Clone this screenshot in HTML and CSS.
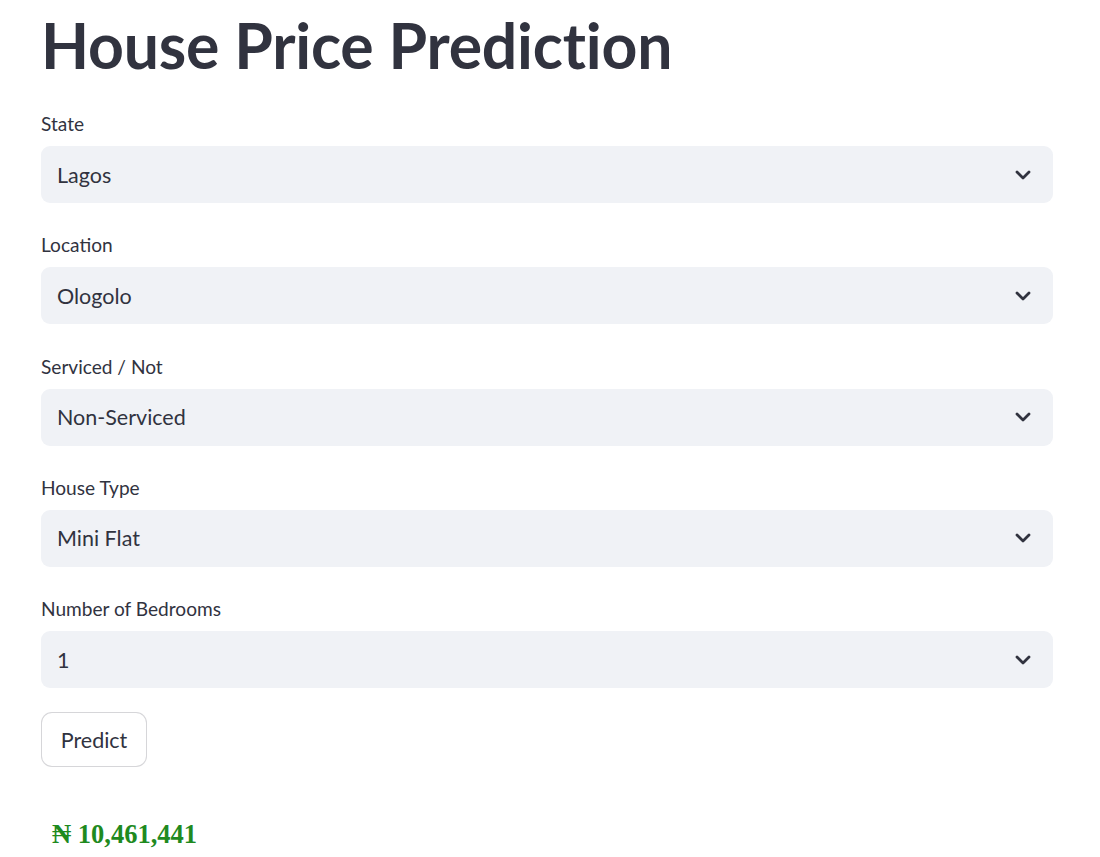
FILE: index.html
```html
<!DOCTYPE html>
<html>
<head>
<meta charset="utf-8">
<link rel="stylesheet" href="styles.css">
</head>
<body>
<main class="app">
  <h1 class="title">House Price Prediction</h1>
  <div class="field">
    <label class="label">State</label>
    <div class="select"><span class="value">Lagos</span><svg class="chev" viewBox="0 0 16 10"><path d="M2 2 L8 8 L14 2" /></svg></div>
  </div>
  <div class="field">
    <label class="label">Location</label>
    <div class="select"><span class="value">Ologolo</span><svg class="chev" viewBox="0 0 16 10"><path d="M2 2 L8 8 L14 2" /></svg></div>
  </div>
  <div class="field">
    <label class="label">Serviced / Not</label>
    <div class="select"><span class="value">Non-Serviced</span><svg class="chev" viewBox="0 0 16 10"><path d="M2 2 L8 8 L14 2" /></svg></div>
  </div>
  <div class="field">
    <label class="label">House Type</label>
    <div class="select"><span class="value">Mini Flat</span><svg class="chev" viewBox="0 0 16 10"><path d="M2 2 L8 8 L14 2" /></svg></div>
  </div>
  <div class="field">
    <label class="label">Number of Bedrooms</label>
    <div class="select"><span class="value">1</span><svg class="chev" viewBox="0 0 16 10"><path d="M2 2 L8 8 L14 2" /></svg></div>
  </div>
  <button class="btn">Predict</button>
  <p class="price">₦ 10,461,441</p>
</main>
</body>
</html>
```
FILE: styles.css
```css
html, body {
  margin: 0;
  padding: 0;
  background: #ffffff;
}
body {
  font-family: "Lato", "Open Sans", sans-serif;
  color: #31333f;
}
.app {
  width: 1012px;
  padding: 0 0 0 41px;
  display: flex;
  flex-direction: column;
}
.title {
  margin: 0;
  padding-top: 8px;
  height: 108px;
  box-sizing: border-box;
  font-size: 62.5px;
  line-height: 74px;
  font-weight: 700;
  letter-spacing: -0.2px;
  color: #31333f;
}
.field {
  display: flex;
  flex-direction: column;
  margin-bottom: 26.3px;
}
.label {
  font-size: 19.1px;
  line-height: 31px;
  height: 31px;
  margin-bottom: 7px;
  color: #31333f;
}
.select {
  height: 57px;
  background: #f0f2f6;
  border-radius: 9px;
  display: flex;
  align-items: center;
  justify-content: space-between;
  padding: 0 22px 0 16px;
}
.value {
  font-size: 21.5px;
  color: #31333f;
}
.chev {
  width: 16px;
  height: 10px;
  fill: none;
  stroke: #31333f;
  stroke-width: 2.8;
  stroke-linecap: round;
  stroke-linejoin: round;
}
.btn {
  align-self: flex-start;
  margin-top: -2px;
  width: 106px;
  height: 55px;
  border: 1.4px solid rgba(49, 51, 63, 0.2);
  border-radius: 11px;
  background: #ffffff;
  font-family: "Lato", "Open Sans", sans-serif;
  font-size: 21.5px;
  color: #31333f;
  padding: 0;
}
.price {
  margin: 52px 0 0 11px;
  font-family: "Liberation Serif", serif;
  font-weight: 700;
  font-size: 26.5px;
  line-height: 30px;
  color: #1f8a1f;
}
```
